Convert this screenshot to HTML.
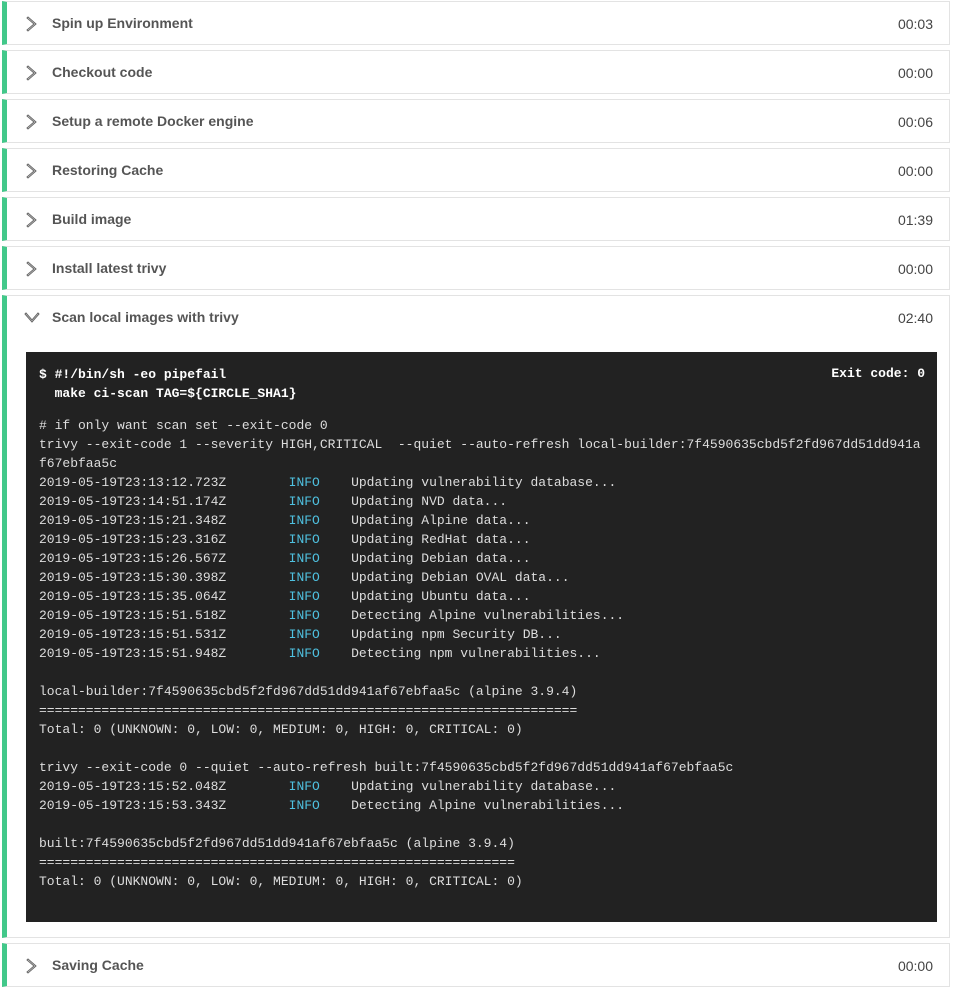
<!DOCTYPE html>
<html><head><meta charset="utf-8"><style>
body{margin:0;background:#fff;width:960px;height:996px;position:relative;font-family:"Liberation Sans",sans-serif;overflow:hidden}
.row{position:absolute;left:2px;width:948px;border:1px solid #e3e3e3;border-left:5px solid #42c88a;box-sizing:border-box;background:#fff}
.hd{position:absolute;left:0;top:0;right:0;height:43px}
.t{position:absolute;left:45px;top:13px;font-size:14px;font-weight:bold;color:#555}
.tm{position:absolute;right:16px;top:14px;font-size:14px;color:#444}
svg.c{position:absolute;left:19px;top:14px}
.term{position:absolute;left:19px;top:56px;width:911px;height:570px;background:#222;color:#ddd;font-family:"Liberation Mono",monospace;font-size:13px;line-height:19px;box-sizing:border-box;padding:13px 13px}
.term pre{margin:0;font:inherit;white-space:pre}
.term pre.b{font-weight:bold;color:#fff}
.i{color:#4fc1e0}
.ex{position:absolute;right:12px;top:12px;font-weight:bold;color:#fff}
</style></head><body>
<div class="row" style="top:1px;height:44px"><div class="hd"><svg class="c" width="12" height="16" viewBox="0 0 12 16"><path d="M2 1 L10 8 L2 15 L1 14 L8 8 L1 2Z" fill="none" stroke="#666" stroke-width="1"/></svg><div class="t">Spin up Environment</div><div class="tm">00:03</div></div></div>
<div class="row" style="top:50px;height:44px"><div class="hd"><svg class="c" width="12" height="16" viewBox="0 0 12 16"><path d="M2 1 L10 8 L2 15 L1 14 L8 8 L1 2Z" fill="none" stroke="#666" stroke-width="1"/></svg><div class="t">Checkout code</div><div class="tm">00:00</div></div></div>
<div class="row" style="top:99px;height:44px"><div class="hd"><svg class="c" width="12" height="16" viewBox="0 0 12 16"><path d="M2 1 L10 8 L2 15 L1 14 L8 8 L1 2Z" fill="none" stroke="#666" stroke-width="1"/></svg><div class="t">Setup a remote Docker engine</div><div class="tm">00:06</div></div></div>
<div class="row" style="top:148px;height:44px"><div class="hd"><svg class="c" width="12" height="16" viewBox="0 0 12 16"><path d="M2 1 L10 8 L2 15 L1 14 L8 8 L1 2Z" fill="none" stroke="#666" stroke-width="1"/></svg><div class="t">Restoring Cache</div><div class="tm">00:00</div></div></div>
<div class="row" style="top:197px;height:44px"><div class="hd"><svg class="c" width="12" height="16" viewBox="0 0 12 16"><path d="M2 1 L10 8 L2 15 L1 14 L8 8 L1 2Z" fill="none" stroke="#666" stroke-width="1"/></svg><div class="t">Build image</div><div class="tm">01:39</div></div></div>
<div class="row" style="top:246px;height:44px"><div class="hd"><svg class="c" width="12" height="16" viewBox="0 0 12 16"><path d="M2 1 L10 8 L2 15 L1 14 L8 8 L1 2Z" fill="none" stroke="#666" stroke-width="1"/></svg><div class="t">Install latest trivy</div><div class="tm">00:00</div></div></div>
<div class="row" style="top:295px;height:643px"><div class="hd"><svg class="c" width="16" height="12" viewBox="0 0 16 12" style="left:17px;top:16px"><path d="M1 2 L8 10 L15 2 L14 1 L8 8 L2 1Z" fill="none" stroke="#666" stroke-width="1"/></svg><div class="t">Scan local images with trivy</div><div class="tm">02:40</div></div>
<div class="term"><div class="ex">Exit code: 0</div><pre class="b">$ #!/bin/sh -eo pipefail
  make ci-scan TAG=${CIRCLE_SHA1}</pre><pre style="margin-top:13px"># if only want scan set --exit-code 0
trivy --exit-code 1 --severity HIGH,CRITICAL  --quiet --auto-refresh local-builder:7f4590635cbd5f2fd967dd51dd941a
f67ebfaa5c
2019-05-19T23:13:12.723Z        <span class="i">INFO</span>    Updating vulnerability database...
2019-05-19T23:14:51.174Z        <span class="i">INFO</span>    Updating NVD data...
2019-05-19T23:15:21.348Z        <span class="i">INFO</span>    Updating Alpine data...
2019-05-19T23:15:23.316Z        <span class="i">INFO</span>    Updating RedHat data...
2019-05-19T23:15:26.567Z        <span class="i">INFO</span>    Updating Debian data...
2019-05-19T23:15:30.398Z        <span class="i">INFO</span>    Updating Debian OVAL data...
2019-05-19T23:15:35.064Z        <span class="i">INFO</span>    Updating Ubuntu data...
2019-05-19T23:15:51.518Z        <span class="i">INFO</span>    Detecting Alpine vulnerabilities...
2019-05-19T23:15:51.531Z        <span class="i">INFO</span>    Updating npm Security DB...
2019-05-19T23:15:51.948Z        <span class="i">INFO</span>    Detecting npm vulnerabilities...

local-builder:7f4590635cbd5f2fd967dd51dd941af67ebfaa5c (alpine 3.9.4)
=====================================================================
Total: 0 (UNKNOWN: 0, LOW: 0, MEDIUM: 0, HIGH: 0, CRITICAL: 0)

trivy --exit-code 0 --quiet --auto-refresh built:7f4590635cbd5f2fd967dd51dd941af67ebfaa5c
2019-05-19T23:15:52.048Z        <span class="i">INFO</span>    Updating vulnerability database...
2019-05-19T23:15:53.343Z        <span class="i">INFO</span>    Detecting Alpine vulnerabilities...

built:7f4590635cbd5f2fd967dd51dd941af67ebfaa5c (alpine 3.9.4)
=============================================================
Total: 0 (UNKNOWN: 0, LOW: 0, MEDIUM: 0, HIGH: 0, CRITICAL: 0)</pre></div></div>
<div class="row" style="top:943px;height:44px"><div class="hd"><svg class="c" width="12" height="16" viewBox="0 0 12 16"><path d="M2 1 L10 8 L2 15 L1 14 L8 8 L1 2Z" fill="none" stroke="#666" stroke-width="1"/></svg><div class="t">Saving Cache</div><div class="tm">00:00</div></div></div>
</body></html>
